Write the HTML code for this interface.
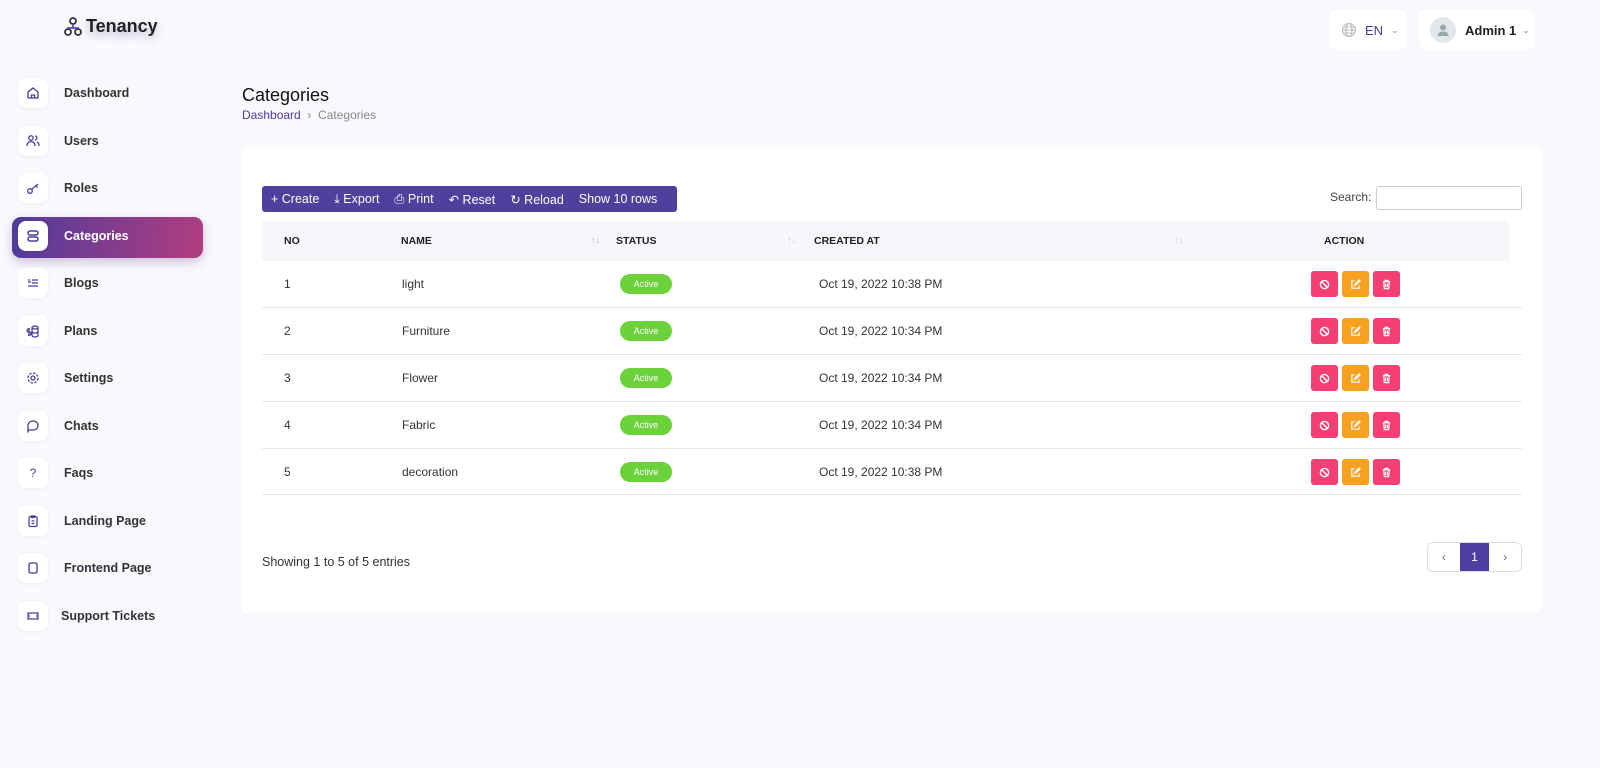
<!DOCTYPE html>
<html><head><meta charset="utf-8"><style>
*{box-sizing:border-box;margin:0;padding:0}
body{width:1600px;height:768px;background:#f8f9fd;font-family:"Liberation Sans",sans-serif;position:relative;overflow:hidden;color:#222}
.abs{position:absolute}
.logo{left:64px;top:16px;font-size:18px;font-weight:bold;color:#222;display:flex;align-items:center;gap:4px;text-shadow:0 4px 8px rgba(60,60,120,.35)}
.item{position:absolute;left:18px;width:200px;height:30px;display:flex;align-items:center}
.ib{width:30px;height:30px;background:#fff;border-radius:8px;display:flex;align-items:center;justify-content:center;box-shadow:0 1px 4px rgba(0,0,0,.05)}
.item span{margin-left:16px;font-size:12.5px;font-weight:bold;color:#333}
.active{position:absolute;left:12px;top:217px;width:191px;height:41px;border-radius:9px;background:linear-gradient(100deg,#4e3b9c,#b23d7f);box-shadow:0 4px 10px rgba(120,60,140,.3)}
.top{background:#fff;border-radius:8px;height:40px;top:10px;display:flex;align-items:center}
.card{left:242px;top:145px;width:1300px;height:467px;background:#fff;border-radius:8px}
.tb{left:262px;top:186px;width:415px;height:26px;background:#50409e;border-radius:3px;color:#fff;font-size:12.5px;display:flex;align-items:center;gap:15px;padding-left:9px}
.th{left:262px;top:221px;width:1247px;height:40px;background:#f6f7fb;font-size:10.5px;font-weight:bold}
.th>div,.row>div{position:absolute}
.row{position:absolute;left:262px;width:1260px;height:47px;border-bottom:1px solid #e6e6ec;font-size:12px;color:#333}
.badge{background:#6bd23c;color:#fff;font-size:9px;width:52px;height:20px;border-radius:10px;text-align:center;line-height:20px}
.acts{display:flex;gap:4px}
.btn{width:27px;height:26px;border-radius:3px;display:flex;align-items:center;justify-content:center}
</style></head><body>
<div class="abs logo"><svg width="18" height="20" viewBox="0 0 18 20" fill="none" stroke="#333" stroke-width="1.8"><circle cx="9" cy="4" r="3"/><circle cx="4" cy="15" r="3"/><circle cx="14" cy="15" r="3"/><path d="M9 7v4M4 12v-1h10v1" stroke="#5a45b0"/></svg>Tenancy</div>

<div class="active"></div>
<div class="item" style="top:78px"><div class="ib"><svg width="14" height="14" viewBox="0 0 14 14" fill="none" stroke="#4e3b9c" stroke-width="1.3"><path d="M2 6l5-4 5 4v6H2zM5.5 12V9h3v3"/></svg></div><span>Dashboard</span></div>
<div class="item" style="top:126px"><div class="ib"><svg width="14" height="14" viewBox="0 0 14 14" fill="none" stroke="#4e3b9c" stroke-width="1.3"><circle cx="5" cy="4" r="2.2"/><path d="M1 12c0-3 2-4.5 4-4.5s4 1.5 4 4.5M9 2a2 2 0 010 4M11 8c1.5.6 2 2 2 4"/></svg></div><span>Users</span></div>
<div class="item" style="top:173px"><div class="ib"><svg width="14" height="14" viewBox="0 0 14 14" fill="none" stroke="#4e3b9c" stroke-width="1.3"><circle cx="4" cy="10" r="2.3"/><path d="M6 8l6-5M10 5l1.5 1.5"/></svg></div><span>Roles</span></div>
<div class="item" style="top:221px"><div class="ib"><svg width="14" height="14" viewBox="0 0 14 14" fill="none" stroke="#4e3b9c" stroke-width="1.5"><rect x="2" y="2" width="10" height="4" rx="2"/><rect x="2" y="8" width="10" height="4" rx="2"/></svg></div><span style="color:#fff">Categories</span></div>
<div class="item" style="top:268px"><div class="ib"><svg width="14" height="14" viewBox="0 0 14 14" fill="none" stroke="#4e3b9c" stroke-width="1.3"><path d="M2 4h2M6 4h6M6 7h6M2 10h10M2 6h3"/></svg></div><span>Blogs</span></div>
<div class="item" style="top:316px"><div class="ib"><svg width="14" height="14" viewBox="0 0 14 14" fill="none" stroke="#4e3b9c" stroke-width="1.3"><ellipse cx="9" cy="3.5" rx="3" ry="1.5"/><path d="M6 3.5v8c0 .8 1.3 1.5 3 1.5s3-.7 3-1.5v-8M6 7.5c0 .8 1.3 1.5 3 1.5s3-.7 3-1.5M4 5H2.5a1 1 0 000 3h1a1 1 0 010 3H2M3 4v8"/></svg></div><span>Plans</span></div>
<div class="item" style="top:363px"><div class="ib"><svg width="14" height="14" viewBox="0 0 14 14" fill="none" stroke="#4e3b9c" stroke-width="1.3"><circle cx="7" cy="7" r="2"/><circle cx="7" cy="7" r="5" stroke-dasharray="2.5 1.4"/></svg></div><span>Settings</span></div>
<div class="item" style="top:411px"><div class="ib"><svg width="14" height="14" viewBox="0 0 14 14" fill="none" stroke="#4e3b9c" stroke-width="1.3"><path d="M7 2c3 0 5 2 5 4.5S10 11 7 11H3l-1 1.5V6.5C2 4 4 2 7 2z"/></svg></div><span>Chats</span></div>
<div class="item" style="top:458px"><div class="ib" style="color:#4e3b9c;font-size:12px">?</div><span>Faqs</span></div>
<div class="item" style="top:506px"><div class="ib"><svg width="14" height="14" viewBox="0 0 14 14" fill="none" stroke="#4e3b9c" stroke-width="1.3"><rect x="3" y="2.5" width="8" height="10" rx="1.5"/><path d="M5.5 2h3v1.5h-3zM5.5 7h3M5.5 9.5h3"/></svg></div><span>Landing Page</span></div>
<div class="item" style="top:553px"><div class="ib"><svg width="14" height="14" viewBox="0 0 14 14" fill="none" stroke="#4e3b9c" stroke-width="1.3"><rect x="3" y="2" width="8" height="10" rx="1.5"/></svg></div><span>Frontend Page</span></div>
<div class="item" style="top:601px"><div class="ib"><svg width="14" height="14" viewBox="0 0 14 14" fill="none" stroke="#4e3b9c" stroke-width="1.3"><path d="M2 4h10v2a1 1 0 000 2v2H2V8a1 1 0 000-2z"/></svg></div><span style="margin-left:13px">Support Tickets</span></div>

<div class="abs top" style="left:1330px;width:76px;padding-left:11px;gap:8px"><svg width="16" height="16" viewBox="0 0 16 16" fill="none" stroke="#bbb" stroke-width="1.1"><circle cx="8" cy="8" r="6.5"/><ellipse cx="8" cy="8" rx="3" ry="6.5"/><path d="M1.5 8h13M2.5 5h11M2.5 11h11"/></svg><span style="color:#4e3b9c;font-size:13px">EN</span><span style="color:#888;font-size:9px">&#8964;</span></div>
<div class="abs top" style="left:1419px;width:116px;padding-left:11px"><div style="width:26px;height:26px;border-radius:50%;background:#e3e7ea;display:flex;align-items:center;justify-content:center"><svg width="14" height="14" viewBox="0 0 14 14" fill="#9aa7ad"><circle cx="7" cy="4.5" r="3"/><path d="M1.5 13c0-3 2.5-4.5 5.5-4.5s5.5 1.5 5.5 4.5z"/></svg></div><span style="margin-left:9px;font-size:13px;font-weight:bold;color:#222">Admin 1</span><span style="color:#888;font-size:9px;margin-left:6px">&#8964;</span></div>

<div class="abs" style="left:242px;top:85px;font-size:18px;color:#111">Categories</div>
<div class="abs" style="left:242px;top:108px;font-size:12px;color:#888"><span style="color:#4e3b9c">Dashboard</span> &nbsp;›&nbsp; Categories</div>

<div class="abs card"></div>
<div class="abs tb"><span>+ Create</span><span>⤓ Export</span><span>⎙ Print</span><span>↶ Reset</span><span>↻ Reload</span><span>Show 10 rows</span></div>
<div class="abs" style="left:1330px;top:190px;font-size:12px;color:#444">Search:</div>
<div class="abs" style="left:1376px;top:186px;width:146px;height:24px;border:1px solid #ccc;border-radius:3px"></div>

<div class="abs th">
<div style="left:22px;top:14px">NO</div><div style="left:139px;top:14px">NAME</div><div style="left:329px;top:14px;color:#aaa;font-size:9px;font-weight:normal">↑↓</div>
<div style="left:354px;top:14px">STATUS</div><div style="left:525px;top:14px;color:#ccc;font-size:9px;font-weight:normal">↑↓</div>
<div style="left:552px;top:14px">CREATED AT</div><div style="left:912px;top:14px;color:#ccc;font-size:9px;font-weight:normal">↑↓</div>
<div style="left:1062px;top:14px">ACTION</div></div>

<div class="row" style="top:261px"><div style="left:22px;top:16px">1</div><div style="left:140px;top:16px">light</div><div class="badge" style="left:358px;top:13px">Active</div><div style="left:557px;top:16px">Oct 19, 2022 10:38 PM</div><div class="acts" style="left:1049px;top:10px"><div class="btn" style="background:#f43f74"><svg width="11" height="11" viewBox="0 0 12 12" fill="none" stroke="#fff" stroke-width="1.5"><circle cx="6" cy="6" r="4.5"/><path d="M3 3l6 6"/></svg></div><div class="btn" style="background:#f8a020"><svg width="11" height="11" viewBox="0 0 12 12" fill="none" stroke="#fff" stroke-width="1.3"><path d="M5 2H2v8h8V7M5 7l1-2 4-4 1 1-4 4z"/></svg></div><div class="btn" style="background:#f43f74"><svg width="11" height="11" viewBox="0 0 12 12" fill="none" stroke="#fff" stroke-width="1.3"><path d="M2 3h8M4.5 3V1.5h3V3M3 3l.6 7.5h4.8L9 3M5 5v4M7 5v4"/></svg></div></div></div>
<div class="row" style="top:308px"><div style="left:22px;top:16px">2</div><div style="left:140px;top:16px">Furniture</div><div class="badge" style="left:358px;top:13px">Active</div><div style="left:557px;top:16px">Oct 19, 2022 10:34 PM</div><div class="acts" style="left:1049px;top:10px"><div class="btn" style="background:#f43f74"><svg width="11" height="11" viewBox="0 0 12 12" fill="none" stroke="#fff" stroke-width="1.5"><circle cx="6" cy="6" r="4.5"/><path d="M3 3l6 6"/></svg></div><div class="btn" style="background:#f8a020"><svg width="11" height="11" viewBox="0 0 12 12" fill="none" stroke="#fff" stroke-width="1.3"><path d="M5 2H2v8h8V7M5 7l1-2 4-4 1 1-4 4z"/></svg></div><div class="btn" style="background:#f43f74"><svg width="11" height="11" viewBox="0 0 12 12" fill="none" stroke="#fff" stroke-width="1.3"><path d="M2 3h8M4.5 3V1.5h3V3M3 3l.6 7.5h4.8L9 3M5 5v4M7 5v4"/></svg></div></div></div>
<div class="row" style="top:355px"><div style="left:22px;top:16px">3</div><div style="left:140px;top:16px">Flower</div><div class="badge" style="left:358px;top:13px">Active</div><div style="left:557px;top:16px">Oct 19, 2022 10:34 PM</div><div class="acts" style="left:1049px;top:10px"><div class="btn" style="background:#f43f74"><svg width="11" height="11" viewBox="0 0 12 12" fill="none" stroke="#fff" stroke-width="1.5"><circle cx="6" cy="6" r="4.5"/><path d="M3 3l6 6"/></svg></div><div class="btn" style="background:#f8a020"><svg width="11" height="11" viewBox="0 0 12 12" fill="none" stroke="#fff" stroke-width="1.3"><path d="M5 2H2v8h8V7M5 7l1-2 4-4 1 1-4 4z"/></svg></div><div class="btn" style="background:#f43f74"><svg width="11" height="11" viewBox="0 0 12 12" fill="none" stroke="#fff" stroke-width="1.3"><path d="M2 3h8M4.5 3V1.5h3V3M3 3l.6 7.5h4.8L9 3M5 5v4M7 5v4"/></svg></div></div></div>
<div class="row" style="top:402px"><div style="left:22px;top:16px">4</div><div style="left:140px;top:16px">Fabric</div><div class="badge" style="left:358px;top:13px">Active</div><div style="left:557px;top:16px">Oct 19, 2022 10:34 PM</div><div class="acts" style="left:1049px;top:10px"><div class="btn" style="background:#f43f74"><svg width="11" height="11" viewBox="0 0 12 12" fill="none" stroke="#fff" stroke-width="1.5"><circle cx="6" cy="6" r="4.5"/><path d="M3 3l6 6"/></svg></div><div class="btn" style="background:#f8a020"><svg width="11" height="11" viewBox="0 0 12 12" fill="none" stroke="#fff" stroke-width="1.3"><path d="M5 2H2v8h8V7M5 7l1-2 4-4 1 1-4 4z"/></svg></div><div class="btn" style="background:#f43f74"><svg width="11" height="11" viewBox="0 0 12 12" fill="none" stroke="#fff" stroke-width="1.3"><path d="M2 3h8M4.5 3V1.5h3V3M3 3l.6 7.5h4.8L9 3M5 5v4M7 5v4"/></svg></div></div></div>
<div class="row" style="top:449px;height:46px"><div style="left:22px;top:16px">5</div><div style="left:140px;top:16px">decoration</div><div class="badge" style="left:358px;top:13px">Active</div><div style="left:557px;top:16px">Oct 19, 2022 10:38 PM</div><div class="acts" style="left:1049px;top:10px"><div class="btn" style="background:#f43f74"><svg width="11" height="11" viewBox="0 0 12 12" fill="none" stroke="#fff" stroke-width="1.5"><circle cx="6" cy="6" r="4.5"/><path d="M3 3l6 6"/></svg></div><div class="btn" style="background:#f8a020"><svg width="11" height="11" viewBox="0 0 12 12" fill="none" stroke="#fff" stroke-width="1.3"><path d="M5 2H2v8h8V7M5 7l1-2 4-4 1 1-4 4z"/></svg></div><div class="btn" style="background:#f43f74"><svg width="11" height="11" viewBox="0 0 12 12" fill="none" stroke="#fff" stroke-width="1.3"><path d="M2 3h8M4.5 3V1.5h3V3M3 3l.6 7.5h4.8L9 3M5 5v4M7 5v4"/></svg></div></div></div>

<div class="abs" style="left:262px;top:555px;font-size:12.5px;color:#333">Showing 1 to 5 of 5 entries</div>
<div class="abs" style="left:1427px;top:542px;width:95px;height:30px;border:1px solid #ddd;border-radius:6px;display:flex;font-size:12px;color:#666">
<div style="width:32px;text-align:center;line-height:28px">‹</div>
<div style="width:30px;background:#4f3fa0;color:#fff;text-align:center;line-height:28px">1</div>
<div style="width:32px;text-align:center;line-height:28px">›</div></div>
</body></html>
